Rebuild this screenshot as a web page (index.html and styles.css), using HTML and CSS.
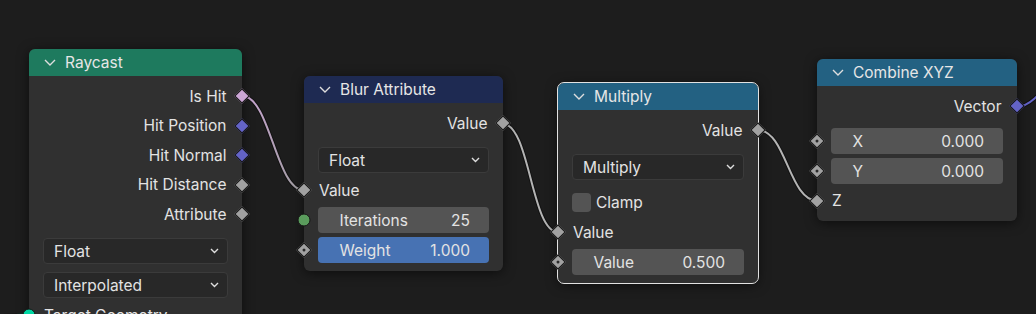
FILE: index.html
```html
<!DOCTYPE html>
<html lang="en">
<head>
    <meta charset="UTF-8">
    <meta name="viewport" content="width=device-width, initial-scale=1.0">
    <title>Geometry Nodes</title>
    <link rel="stylesheet" href="styles.css">
</head>
<body>
<div class="editor">
    <!-- links sit under the nodes -->
    <svg class="links" width="1036" height="314" viewBox="0 0 1036 314">
        <defs>
            <linearGradient id="boolToFloat" gradientUnits="userSpaceOnUse" x1="242" y1="0" x2="304" y2="0">
                <stop offset="0" stop-color="#cca6d6"/>
                <stop offset="1" stop-color="#9a9a9a"/>
            </linearGradient>
        </defs>
        <g class="link-shadow">
            <path d="M242.3 96 C270 96, 276 190.25, 304 190.25"/>
            <path d="M502.7 123.75 C530 123.75, 531 232.25, 558.3 232.25"/>
            <path d="M758.3 130.25 C786 130.25, 789 200.75, 817.3 200.75"/>
            <path d="M1016.7 106.75 C1045 106.75, 1065 40, 1110 40"/>
            <path d="M-50 318 C-15 318, 0 315.25, 29 315.25"/>
        </g>
        <path class="link" stroke="url(#boolToFloat)" d="M242.3 96 C270 96, 276 190.25, 304 190.25"/>
        <path class="link grey" d="M502.7 123.75 C530 123.75, 531 232.25, 558.3 232.25"/>
        <path class="link grey" d="M758.3 130.25 C786 130.25, 789 200.75, 817.3 200.75"/>
        <path class="link vector" d="M1016.7 106.75 C1045 106.75, 1065 40, 1110 40"/>
        <path class="link geometry" d="M-50 318 C-15 318, 0 315.25, 29 315.25"/>
    </svg>

    <!-- Raycast -->
    <div class="node node-raycast">
        <div class="node-header hdr-geometry">
            <svg class="hdr-chevron" width="12" height="7" viewBox="0 0 12 7"><path d="M1 1 L6 6 L11 1"/></svg>
            <span>Raycast</span>
        </div>
        <div class="node-body">
            <div class="row label out">Is Hit<i class="sock diamond bool"></i></div>
            <div class="row label out">Hit Position<i class="sock diamond vec"></i></div>
            <div class="row label out">Hit Normal<i class="sock diamond vec"></i></div>
            <div class="row label out">Hit Distance<i class="sock diamond"></i></div>
            <div class="row label out">Attribute<i class="sock diamond"></i></div>
            <div class="row select-row">
                <div class="select">Float<svg class="sel-chevron" width="9" height="6" viewBox="0 0 9 6"><path d="M1 1 L4.5 4.5 L8 1"/></svg></div>
            </div>
            <div class="row select-row">
                <div class="select">Interpolated<svg class="sel-chevron" width="9" height="6" viewBox="0 0 9 6"><path d="M1 1 L4.5 4.5 L8 1"/></svg></div>
            </div>
            <div class="row label in"><i class="sock circle geo"></i>Target Geometry</div>
        </div>
    </div>

    <!-- Blur Attribute -->
    <div class="node node-blur">
        <div class="node-header hdr-attribute">
            <svg class="hdr-chevron" width="12" height="7" viewBox="0 0 12 7"><path d="M1 1 L6 6 L11 1"/></svg>
            <span>Blur Attribute</span>
        </div>
        <div class="node-body">
            <div class="row label out">Value<i class="sock diamond"></i></div>
            <div class="row select-row">
                <div class="select">Float<svg class="sel-chevron" width="9" height="6" viewBox="0 0 9 6"><path d="M1 1 L4.5 4.5 L8 1"/></svg></div>
            </div>
            <div class="row label in"><i class="sock diamond"></i>Value</div>
            <div class="row field-row">
                <i class="sock circle int"></i>
                <div class="field"><span>Iterations</span><span>25</span></div>
            </div>
            <div class="row field-row">
                <i class="sock diamond dot"></i>
                <div class="field active"><span>Weight</span><span>1.000</span></div>
            </div>
        </div>
    </div>

    <!-- Multiply -->
    <div class="node node-multiply selected">
        <div class="node-header hdr-converter">
            <svg class="hdr-chevron" width="12" height="7" viewBox="0 0 12 7"><path d="M1 1 L6 6 L11 1"/></svg>
            <span>Multiply</span>
        </div>
        <div class="node-body">
            <div class="row label out">Value<i class="sock diamond"></i></div>
            <div class="row select-row">
                <div class="select">Multiply<svg class="sel-chevron" width="9" height="6" viewBox="0 0 9 6"><path d="M1 1 L4.5 4.5 L8 1"/></svg></div>
            </div>
            <div class="row check-row">
                <span class="checkbox"></span>Clamp
            </div>
            <div class="row label in"><i class="sock diamond"></i>Value</div>
            <div class="row field-row">
                <i class="sock diamond dot"></i>
                <div class="field"><span>Value</span><span>0.500</span></div>
            </div>
        </div>
    </div>

    <!-- Combine XYZ -->
    <div class="node node-combine">
        <div class="node-header hdr-converter">
            <svg class="hdr-chevron" width="12" height="7" viewBox="0 0 12 7"><path d="M1 1 L6 6 L11 1"/></svg>
            <span>Combine XYZ</span>
        </div>
        <div class="node-body">
            <div class="row label out">Vector<i class="sock diamond vec"></i></div>
            <div class="row field-row">
                <i class="sock diamond dot"></i>
                <div class="field"><span>X</span><span>0.000</span></div>
            </div>
            <div class="row field-row">
                <i class="sock diamond dot"></i>
                <div class="field"><span>Y</span><span>0.000</span></div>
            </div>
            <div class="row label in"><i class="sock diamond"></i>Z</div>
        </div>
    </div>
</div>
</body>
</html>
```

FILE: styles.css
```css
html, body {
    margin: 0;
    padding: 0;
    overflow: hidden;
    background: #1d1d1d;
}
.editor {
    position: relative;
    width: 1036px;
    height: 314px;
    overflow: hidden;
    background: #1d1d1d;
    font-family: Inter, "Noto Sans", sans-serif;
    font-size: 15.5px;
    color: #e3e3e3;
}

/* links */
.links {
    position: absolute;
    left: 0;
    top: 0;
    z-index: 0;
}
.link-shadow path {
    fill: none;
    stroke: #121212;
    stroke-width: 4;
}
.link {
    fill: none;
    stroke-width: 2;
}
.link.grey { stroke: #b4b4b4; }
.link.vector { stroke: #6363c7; }
.link.geometry { stroke: #00d6a3; stroke-width: 3; }

/* nodes: placed on the canvas */
.node {
    position: absolute;
    z-index: 1;
    background: #303030;
    border-radius: 6px;
    box-shadow: 0 2px 12px rgba(0,0,0,0.55);
}
.node-raycast { left: 29px; top: 49px; width: 213px; min-height: 300px; }
.node-blur { left: 304px; top: 76px; width: 199px; }
.node-multiply { left: 558px; top: 83px; width: 200px; }
.node-combine { left: 817px; top: 59px; width: 200px; }
.node.selected {
    outline: 1.5px solid #e2e2e2;
}

.node-header {
    height: 27px;
    display: flex;
    align-items: center;
    gap: 9px;
    padding-left: 15px;
    border-radius: 6px 6px 0 0;
    color: #e6e6e6;
}
.hdr-geometry { background: #1e7a5e; }
.hdr-attribute { background: #1e2a52; }
.hdr-converter { background: #236182; }
.hdr-chevron path,
.sel-chevron path {
    fill: none;
    stroke: #dedede;
    stroke-width: 1.4;
}

.node-body {
    display: flex;
    flex-direction: column;
    padding: 5.5px 0 5.5px;
}
.row {
    position: relative;
    display: flex;
    align-items: center;
}
.row.label {
    height: 29.5px;
    padding: 0 15.5px 0 15px;
}
.row.out { justify-content: flex-end; }

.select-row {
    margin: 9px 0 2.5px;
    padding: 0 14px;
}
.select-row + .select-row { margin-top: 5.5px; }
.select {
    flex: 1;
    height: 26px;
    box-sizing: border-box;
    display: flex;
    align-items: center;
    justify-content: space-between;
    padding: 0 8px 0 10px;
    background: #282828;
    border: 1px solid #3b3b3b;
    border-radius: 4px;
}

.field-row {
    margin: 2px 0;
    padding: 0 14px;
}
.out + .field-row { margin-top: 7px; }
.field {
    flex: 1;
    height: 26px;
    display: flex;
    align-items: center;
    justify-content: space-between;
    padding: 0 19px 0 21.5px;
    background: #545454;
    border-radius: 4px;
}
.field.active { background: #4772b3; }

.check-row {
    height: 26px;
    margin: 6.5px 0 2.5px;
    padding: 0 14px;
    gap: 5px;
}
.checkbox {
    width: 19px;
    height: 19px;
    background: #545454;
    border-radius: 4px;
}

/* sockets */
.sock {
    position: absolute;
    top: 50%;
    left: 0;
    box-sizing: border-box;
    border: 1px solid #161616;
}
.row.out .sock { left: 100%; }
.sock.diamond {
    width: 11px;
    height: 11px;
    background: #a1a1a1;
    transform: translate(-50%, -50%) rotate(45deg);
}
.sock.diamond.bool { background: #cca6d6; }
.sock.diamond.vec { background: #6363c7; }
.sock.diamond.dot::after {
    content: "";
    position: absolute;
    left: 3px;
    top: 3px;
    width: 3px;
    height: 3px;
    border-radius: 50%;
    background: #2a2a2a;
}
.sock.circle {
    width: 13px;
    height: 13px;
    border-radius: 50%;
    transform: translate(-50%, -50%);
}
.sock.circle.int { background: #5a9b5c; }
.sock.circle.geo { background: #00d6a3; }
```
